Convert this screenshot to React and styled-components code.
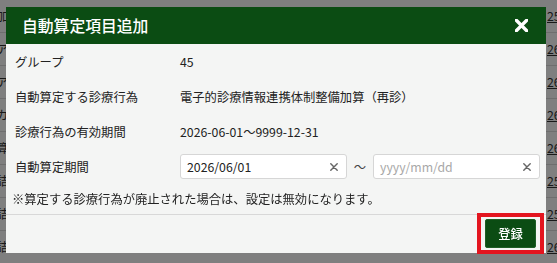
import React from "react";
import styled, { createGlobalStyle } from "styled-components";

const GlobalStyle = createGlobalStyle`
  html, body {
    margin: 0;
    padding: 0;
    width: 557px;
    height: 263px;
    overflow: hidden;
    font-family: "Noto Sans CJK JP", "Noto Sans", sans-serif;
  }
`;

const Page = styled.div`
  width: 557px;
  height: 263px;
  background: #ffffff;
  overflow: hidden;
`;

const BgRow = styled.div`
  height: 32px;
  display: flex;
  align-items: center;
  justify-content: space-between;
  border-bottom: 1px solid #dcdcdc;
  font-size: 12.3px;
  color: #333;
`;

const BgLeft = styled.span`
  margin-left: -4px;
`;

const BgRight = styled.span`
  width: 10px;
  overflow: hidden;
  white-space: nowrap;
  text-decoration: underline;
`;

const Backdrop = styled.div`
  position: fixed;
  inset: 0;
  background: rgba(0, 0, 0, 0.5);
`;

const Dialog = styled.div`
  position: fixed;
  top: 7px;
  left: 6px;
  width: 540px;
  height: 246px;
  background: #f4f5f4;
  display: flex;
  flex-direction: column;
`;

const Header = styled.div`
  height: 37px;
  background: #0b4c13;
  display: flex;
  align-items: center;
  justify-content: space-between;
  padding: 0 18px 0 16px;
  color: #fff;
`;

const Title = styled.h2`
  margin: 0;
  font-size: 15.8px;
  font-weight: 500;
`;

const CloseButton = styled.button`
  border: none;
  background: none;
  padding: 0;
  display: flex;
  cursor: pointer;
`;

const Body = styled.div`
  padding: 0 7px;
  font-size: 12.3px;
  color: #222;
`;

const Row = styled.div`
  display: grid;
  grid-template-columns: 167px 1fr;
  align-items: center;
  height: 35px;
`;

const Label = styled.div`
  padding-left: 2px;
`;

const Value = styled.div`
  display: flex;
  align-items: center;
`;

const DateBox = styled.div`
  width: 167px;
  height: 25px;
  box-sizing: border-box;
  border: 1px solid #d6d6d6;
  border-radius: 3px;
  background: #fff;
  display: flex;
  align-items: center;
  justify-content: space-between;
  padding: 0 8px 0 6px;
  color: ${(p) => (p.empty ? "#a8a8a8" : "#222")};
`;

const Tilde = styled.span`
  width: 26px;
  text-align: center;
  color: #444;
`;

const Note = styled.div`
  height: 30px;
  display: flex;
  align-items: center;
  padding-left: 0;
  border-bottom: 1px solid #d8d8d8;
  margin: 0 -7px;
  padding: 0 6px;
`;

const Footer = styled.div`
  flex: 1;
  display: flex;
  justify-content: flex-end;
  align-items: flex-start;
  padding: 0 2px 0 0;
`;

const Highlight = styled.div`
  border: 4px solid #e3151f;
  padding: 2px 4px;
  margin-top: -2px;
  margin-bottom: -1px;
`;

const SubmitButton = styled.button`
  width: 51px;
  height: 29px;
  border: 1px solid #1e5e26;
  border-radius: 2px;
  background: #0b4c13;
  color: #fff;
  font-family: inherit;
  font-size: 12.3px;
  font-weight: 500;
  cursor: pointer;
`;

const ClearIcon = ({ size = 8, color = "#666", width = 1.8 }) => (
  <svg width={size} height={size} viewBox="0 0 10 10">
    <path d="M1 1L9 9M9 1L1 9" stroke={color} strokeWidth={width} strokeLinecap="round" />
  </svg>
);

const bgRows = [
  ["加", "25"],
  ["ア", "26"],
  ["ア", "26"],
  ["カ", "26"],
  ["算", "26"],
  ["詰", "25"],
  ["詰", "25"],
  ["詰", "26"],
];

const rows = [
  ["グループ", "45"],
  ["自動算定する診療行為", "電子的診療情報連携体制整備加算（再診）"],
  ["診療行為の有効期間", "2026-06-01～9999-12-31"],
];

export default function App() {
  return (
    <Page>
      <GlobalStyle />
      {bgRows.map(([l, r], i) => (
        <BgRow key={i}>
          <BgLeft>{l}</BgLeft>
          <BgRight>{r}</BgRight>
        </BgRow>
      ))}
      <Backdrop />
      <Dialog>
        <Header>
          <Title>自動算定項目追加</Title>
          <CloseButton>
            <ClearIcon size={13} color="#fff" width={2.6} />
          </CloseButton>
        </Header>
        <Body>
          {rows.map(([label, value]) => (
            <Row key={label}>
              <Label>{label}</Label>
              <Value>{value}</Value>
            </Row>
          ))}
          <Row>
            <Label>自動算定期間</Label>
            <Value>
              <DateBox>
                2026/06/01
                <ClearIcon />
              </DateBox>
              <Tilde>～</Tilde>
              <DateBox empty>
                yyyy/mm/dd
                <ClearIcon />
              </DateBox>
            </Value>
          </Row>
          <Note>※算定する診療行為が廃止された場合は、設定は無効になります。</Note>
        </Body>
        <Footer>
          <Highlight>
            <SubmitButton>登録</SubmitButton>
          </Highlight>
        </Footer>
      </Dialog>
    </Page>
  );
}
